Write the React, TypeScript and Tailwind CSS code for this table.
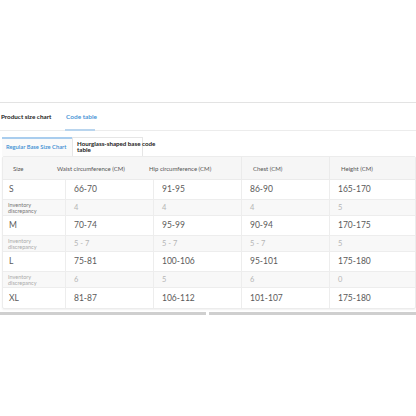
import React from 'react';

type Row = {
  size: string;
  values: string[];
  diff?: string[];
};

const rows: Row[] = [
  { size: 'S', values: ['66-70', '91-95', '86-90', '165-170'], diff: ['4', '4', '4', '5'] },
  { size: 'M', values: ['70-74', '95-99', '90-94', '170-175'], diff: ['5 - 7', '5 - 7', '5 - 7', '5'] },
  { size: 'L', values: ['75-81', '100-106', '95-101', '175-180'], diff: ['6', '5', '6', '0'] },
  { size: 'XL', values: ['81-87', '106-112', '101-107', '175-180'] }
];

const headers = [
  { label: 'Size', cls: 'pl-[10px]' },
  { label: 'Waist circumference (CM)', cls: 'pl-[8px]' },
  { label: 'Hip circumference (CM)', cls: 'pl-[8px]' },
  { label: 'Chest (CM)', cls: 'pl-[11px] border-l border-[#ebebeb]' },
  { label: 'Height (CM)', cls: 'pl-[11px] border-l border-[#ebebeb]' }
];

const App: React.FC = () => {
  return (
    <div className="w-[416px] h-[416px] bg-white overflow-hidden" style={{ fontFamily: 'Lato, "Open Sans", sans-serif' }}>
      <div className="h-[102px]"></div>
      <div className="border-t border-[#e3e3e3]">
        {/* main tabs */}
        <div className="flex h-[28px] items-stretch border-b border-[#ececec]">
          <div className="flex items-center pl-[1px] w-[65px] text-[6.3px] font-bold text-[#222]">Product size chart</div>
          <div className="flex flex-col justify-center relative">
            <span className="text-[6.5px] font-semibold text-[#3b8ed3] px-[1px]">Code table</span>
            <div className="absolute bottom-[-1px] left-0 w-[30px] h-[2px] bg-[#b9d5ee]"></div>
          </div>
        </div>

        {/* sub tabs */}
        <div className="flex mt-[6px] pl-[2px]">
          <div className="w-[70px] h-[19px] border-t-2 border-[#a9cdee] bg-[#fafafa] flex items-center pl-[4px] text-[5.8px] font-semibold text-[#3b8ed3] whitespace-nowrap">
            Regular Base Size Chart
          </div>
          <div className="w-[71px] h-[19px] border border-b-0 border-[#e6e6e6] flex items-center pl-[4px]">
            <span className="w-[84px] shrink-0 text-[6.2px] font-bold leading-[6.5px] text-[#222]">Hourglass-shaped base code table</span>
          </div>
        </div>

        {/* table */}
        <div className="ml-[2px] border border-[#ececec] rounded-[2px] shadow-[0_1px_2px_rgba(0,0,0,0.06)]">
          <div className="grid grid-cols-[46px_92px_100px_88px_88px] h-[23px] bg-[#f6f6f6] border-b border-[#ebebeb] text-[6px] text-[#555]">
            {headers.map((h) => (
              <div key={h.label} className={`flex items-center ${h.cls}`}>{h.label}</div>
            ))}
          </div>
          {rows.map((r, i) => (
            <React.Fragment key={r.size}>
              <div className={`grid grid-cols-[62px_88px_88px_88px_88px] h-[20px] text-[8.5px] text-[#5a5a5a] ${i < rows.length - 1 ? 'border-b border-[#ededed]' : ''}`}>
                <div className="flex items-center pl-[6px]">{r.size}</div>
                {r.values.map((v, j) => (
                  <div key={j} className="flex items-center pl-[8px] border-l border-[#ededed]">{v}</div>
                ))}
              </div>
              {r.diff && (
                <div className="grid grid-cols-[62px_88px_88px_88px_88px] h-[16px] bg-[#f8f8f8] border-b border-[#ededed]">
                  <div className={`flex items-center pl-[5px] pr-[20px] text-[5.5px] leading-[6px] ${i === 0 ? 'text-[#777]' : 'text-[#aaa]'}`}>Inventory discrepancy</div>
                  {r.diff.map((d, j) => (
                    <div key={j} className="flex items-center pl-[8px] border-l border-[#ededed] text-[7.5px] text-[#b5b5b5]">{d}</div>
                  ))}
                </div>
              )}
            </React.Fragment>
          ))}
        </div>

        {/* scrollbar */}
        <div className="flex mt-[3px] h-[3px] gap-[3px]">
          <div className="w-[206px] bg-[#cfcfcf]"></div>
          <div className="flex-1 bg-[#cfcfcf]"></div>
        </div>
      </div>
    </div>
  );
};

export default App;
